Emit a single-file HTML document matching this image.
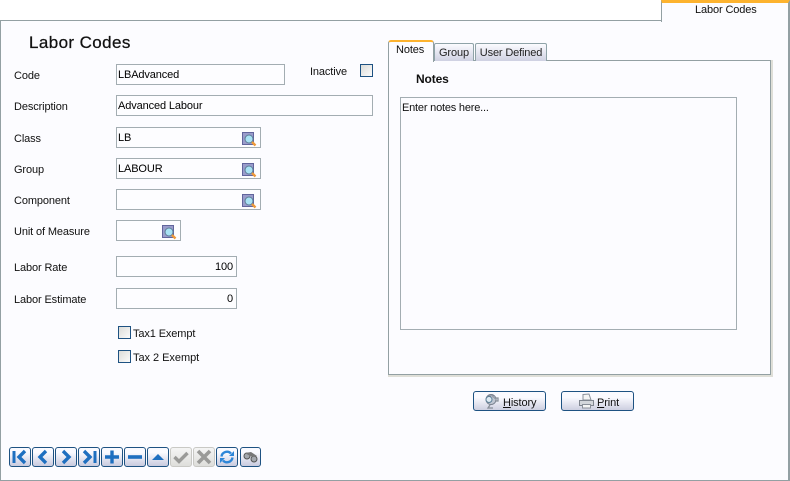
<!DOCTYPE html>
<html><head><meta charset="utf-8"><style>
html,body{margin:0;padding:0}
body{width:790px;height:481px;overflow:hidden;background:#fff;position:relative;font:11px "Liberation Sans",sans-serif;color:#000;letter-spacing:-.12px}
div,span{position:absolute;box-sizing:border-box;white-space:nowrap}
.l{left:14px;height:14px;line-height:14px;color:#111}
.f{left:116px;height:21px;border:1px solid #a3adb2;background:#fdfdff;line-height:19px;padding-top:1px;padding-left:1px}
.r{text-align:right;padding-right:3px;padding-left:0}
.c{width:13px;height:13px;border:1px solid #1e5282;background:linear-gradient(135deg,#dcdcd8,#fbfbfb)}
.t{top:43px;height:18px;border:1px solid #8fa3a8;border-bottom:none;border-radius:2px 2px 0 0;background:linear-gradient(#fbfbff,#cfd1e2);text-align:center;line-height:18px;color:#222}
.b{top:391px;height:20px;width:73px;border:1px solid #1e5282;border-radius:3px;background:linear-gradient(#fafaff 30%,#cdcfe0);line-height:20px;color:#111}
.n{top:447px;width:22px;height:20px;border:1px solid #1e5282;border-radius:3px;background:linear-gradient(#fafaff 25%,#c8cade)}
.d{border-color:#c9c9c5;background:linear-gradient(#f5f5f5,#dededb)}
.n svg{position:absolute;left:0;top:0}
</style></head><body>
<div style="left:0;top:20px;width:790px;height:461px;background:#fcfcff;border:1px solid #93a0a3;border-width:0 2px 1px 1px"></div>
<div style="left:0;top:20px;width:662px;height:1px;background:#93a0a3"></div>
<div style="left:661px;top:0;width:129px;height:22px;background:#fcfcff;border-left:1px solid #93a0a3;border-right:2px solid #93a0a3;border-top:3px solid #fdb32f;line-height:14px;color:#111"><span style="left:33px;top:0">Labor Codes</span></div>

<div style="left:29px;top:33px;font-size:17px;line-height:19px;color:#111;letter-spacing:.4px;-webkit-text-stroke:.25px #111">Labor Codes</div>

<div class="l" style="top:69px">Code</div>
<div class="l" style="top:100px">Description</div>
<div class="l" style="top:132px">Class</div>
<div class="l" style="top:163px">Group</div>
<div class="l" style="top:194px">Component</div>
<div class="l" style="top:225px">Unit of Measure</div>
<div class="l" style="top:261px">Labor Rate</div>
<div class="l" style="top:293px">Labor Estimate</div>

<div class="f" style="top:64px;width:169px">LBAdvanced</div>
<div class="f" style="top:95px;width:257px">Advanced Labour</div>
<div class="f" style="top:127px;width:145px">LB</div>
<div class="f" style="top:158px;width:145px">LABOUR</div>
<div class="f" style="top:189px;width:145px"></div>
<div class="f" style="top:220px;width:65px"></div>
<div class="f r" style="top:256px;width:121px">100</div>
<div class="f r" style="top:288px;width:121px">0</div>

<svg width="0" height="0" style="position:absolute"><defs><symbol id="m" viewBox="0 0 16 17"><rect x="1.500" y="1.500" width="11" height="12" fill="#9a9ccb" stroke="#62659c"/><circle cx="8" cy="8" r="4" fill="#a9e2f4" stroke="#5d7f97"/><path d="M11 11l3.500 3.500" stroke="#ee9a3a" stroke-width="2.400"/></symbol></defs></svg>
<svg style="position:absolute;left:241px;top:131px;width:16px;height:17px"><use href="#m"/></svg>
<svg style="position:absolute;left:241px;top:162px;width:16px;height:17px"><use href="#m"/></svg>
<svg style="position:absolute;left:241px;top:193px;width:16px;height:17px"><use href="#m"/></svg>
<svg style="position:absolute;left:161px;top:224px;width:16px;height:17px"><use href="#m"/></svg>

<div style="left:310px;top:65px;line-height:14px;color:#111">Inactive</div>
<div class="c" style="left:360px;top:64px"></div>
<div class="c" style="left:118px;top:326px"></div>
<div style="left:133px;top:327px;line-height:14px;color:#111">Tax1 Exempt</div>
<div class="c" style="left:118px;top:350px"></div>
<div style="left:133px;top:351px;line-height:14px;color:#111;letter-spacing:-.04px">Tax 2 Exempt</div>

<div style="left:388px;top:60px;width:385px;height:317px;background:#dfdfd8"></div>
<div style="left:388px;top:60px;width:383px;height:315px;background:#fcfcff;border:1px solid #93a0a3"></div>
<div class="t" style="left:434px;width:40px">Group</div>
<div class="t" style="left:475px;width:72px;letter-spacing:-.15px">User Defined</div>
<div style="left:388px;top:40px;width:46px;height:22px;background:#fcfcff;border:1px solid #93a0a3;border-top:2px solid #fdb32f;border-bottom:none;border-radius:3px 3px 0 0;line-height:17px;color:#111"><span style="left:7px;top:0">Notes</span></div>
<div style="left:416px;top:72px;font-size:12px;font-weight:bold;line-height:15px;color:#111">Notes</div>
<div style="left:400px;top:97px;width:337px;height:233px;background:#fcfcff;border:1px solid #a3adb2;padding:3px 0 0 1px;line-height:14px;color:#111;letter-spacing:-.2px">Enter notes here...</div>

<div class="b" style="left:473px"><svg style="position:absolute;left:8px;top:1px" width="18" height="17"><path d="M6 3h5v2M9 1.500a5 5 0 1 0 .1 0z" fill="#bfc6d2" stroke="#7b8290"/><circle cx="7" cy="6.500" r="3" fill="#dfeaf2" stroke="#5d7f97"/><path d="M12 5h4v3h-3M8 12l-2 3h5" fill="none" stroke="#888f99" stroke-width="1.300"/></svg><span style="left:29px;top:1px"><u>H</u>istory</span></div>
<div class="b" style="left:561px"><svg style="position:absolute;left:16px;top:1px" width="18" height="17"><path d="M5 1.500l6-.5 2 6H5z" fill="#f4f4f4" stroke="#8a909a"/><path d="M1.500 7.500h14v5h-14z" fill="#d3d6db" stroke="#7f858f"/><path d="M4.500 11.500h8v3.500h-8z" fill="#f5f5f5" stroke="#8a909a"/></svg><span style="left:35px;top:1px"><u>P</u>rint</span></div>

<div class="n" style="left:9px"><svg width="20" height="18"><path d="M4 3v12" stroke="#1e6fc0" stroke-width="3"/><path d="M15 3l-6 6 6 6" fill="none" stroke="#1e6fc0" stroke-width="3.400"/></svg></div>
<div class="n" style="left:32px"><svg width="20" height="18"><path d="M13 3l-6 6 6 6" fill="none" stroke="#1e6fc0" stroke-width="3.400"/></svg></div>
<div class="n" style="left:55px"><svg width="20" height="18"><path d="M7 3l6 6-6 6" fill="none" stroke="#1e6fc0" stroke-width="3.400"/></svg></div>
<div class="n" style="left:78px"><svg width="20" height="18"><path d="M5 3l6 6-6 6" fill="none" stroke="#1e6fc0" stroke-width="3.400"/><path d="M16 3v12" stroke="#1e6fc0" stroke-width="3"/></svg></div>
<div class="n" style="left:101px"><svg width="20" height="18"><path d="M3 9h14M10 2.500v13" stroke="#1e6fc0" stroke-width="3.400"/></svg></div>
<div class="n" style="left:124px"><svg width="20" height="18"><path d="M3 9h14" stroke="#1e6fc0" stroke-width="3.600"/></svg></div>
<div class="n" style="left:147px"><svg width="20" height="18"><path d="M4 12l6-6 6 6z" fill="#1e6fc0"/></svg></div>
<div class="n d" style="left:170px"><svg width="20" height="18"><path d="M3.500 9l4.500 4.500 8.500-8.500" fill="none" stroke="#9a9a98" stroke-width="3.400"/></svg></div>
<div class="n d" style="left:193px"><svg width="20" height="18"><path d="M4 3l12 12M16 3L4 15" stroke="#9a9a98" stroke-width="3.600"/></svg></div>
<div class="n" style="left:216px"><svg width="20" height="18"><path d="M4.500 8.500a5.500 5.500 0 0 1 9.500-3" fill="none" stroke="#2d86d8" stroke-width="2.400"/><path d="M15.500 9.500a5.500 5.500 0 0 1-9.500 3" fill="none" stroke="#2d86d8" stroke-width="2.400"/><path d="M12 8h5V3zM8 10H3v5z" fill="#2d86d8"/></svg></div>
<div class="n" style="left:240px;width:21px"><svg width="19" height="18"><circle cx="6" cy="8" r="3" fill="#a4a8ae" stroke="#555"/><circle cx="13" cy="11" r="3" fill="#a4a8ae" stroke="#555"/><path d="M4 5l6-1 6 4-3 1-4-1z" fill="#777"/></svg></div>
</body></html>
